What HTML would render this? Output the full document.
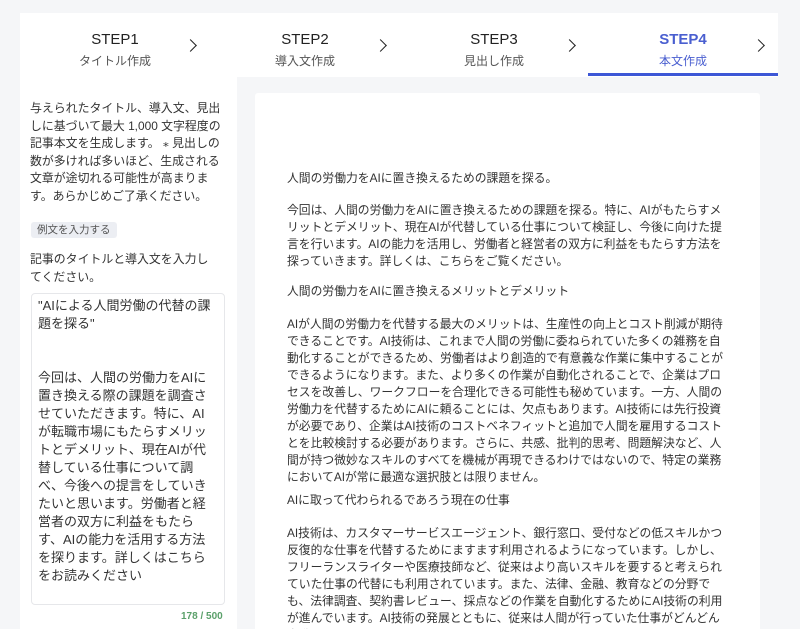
<!DOCTYPE html>
<html><head><meta charset="utf-8"><style>
*{margin:0;padding:0;box-sizing:border-box}
html,body{width:800px;height:629px;overflow:hidden}
body{background:#f5f6f8;font-family:"Liberation Sans","Noto Sans CJK JP",sans-serif;color:#333;position:relative}
.panel{position:absolute;left:20px;top:13px;width:758px;height:616px;background:#fff}
.step{position:absolute;top:13px;height:64px;text-align:center;width:190px}
.step .t{position:absolute;top:18px;width:100%;font-size:15px;color:#222}
.step .s{position:absolute;top:39px;width:100%;font-size:12px;color:#555}
.step .a{position:absolute;top:28px;right:15px;width:9px;height:9px;border-right:1.6px solid #222;border-top:1.6px solid #222;transform:rotate(45deg)}
.active .t{color:#4a5fd0;font-weight:bold}.active .s{color:#4a5fd0}
.bar{position:absolute;left:588px;top:73px;width:190px;height:3px;background:#3d57d6}
.gray{position:absolute;left:237px;top:77px;width:541px;height:560px;background:#f5f6f8}
.card{position:absolute;left:255px;top:93px;width:505px;height:560px;background:#fff;border-radius:3px}
.rt{position:absolute;left:287px;font-size:11.8px;line-height:17px;color:#333;white-space:nowrap}
.lt{position:absolute;left:30px;top:100px;font-size:11.9px;line-height:17.6px;color:#333;white-space:nowrap}
.btn{position:absolute;left:31px;top:222px;padding:0 6px;height:16px;line-height:16px;font-size:10.5px;background:#eceef3;border-radius:3px;color:#555}
.l2{position:absolute;left:30px;top:250px;font-size:11.9px;line-height:18px;white-space:nowrap}
.ta{position:absolute;left:31px;top:293px;width:194px;height:312px;border:1px solid #e6e7ea;border-radius:4px;padding:3px 6px;font-size:13px;line-height:18px;color:#333;white-space:nowrap;overflow:hidden}
.cnt{position:absolute;top:611px;font-size:10px;font-weight:bold;color:#5aa06a}
</style></head><body>
<div class="panel"></div>
<div class="step" style="left:20px"><div class="t">STEP1</div><div class="s">タイトル作成</div><div class="a"></div></div>
<div class="step" style="left:210px"><div class="t">STEP2</div><div class="s">導入文作成</div><div class="a"></div></div>
<div class="step" style="left:399px"><div class="t">STEP3</div><div class="s">見出し作成</div><div class="a"></div></div>
<div class="step active" style="left:588px"><div class="t">STEP4</div><div class="s">本文作成</div><div class="a"></div></div>
<div class="bar"></div>
<div class="lt">与えられたタイトル、導入文、見出<br>しに基づいて最大 1,000 文字程度の<br>記事本文を生成します。 ⁎ 見出しの<br>数が多ければ多いほど、生成される<br>文章が途切れる可能性が高まりま<br>す。あらかじめご了承ください。</div>
<div class="btn">例文を入力する</div>
<div class="l2">記事のタイトルと導入文を入力し<br>てください。</div>
<div class="ta">"AIによる人間労働の代替の課<br>題を探る"<br><br><br>今回は、人間の労働力をAIに<br>置き換える際の課題を調査さ<br>せていただきます。特に、AI<br>が転職市場にもたらすメリッ<br>トとデメリット、現在AIが代<br>替している仕事について調<br>べ、今後への提言をしていき<br>たいと思います。労働者と経<br>営者の双方に利益をもたら<br>す、AIの能力を活用する方法<br>を探ります。詳しくはこちら<br>をお読みください</div>
<div class="cnt" style="left:181px">178 / 500</div>
<div class="gray"></div>
<div class="card"></div>
<div class="rt" style="top:170px">人間の労働力をAIに置き換えるための課題を探る。</div>
<div class="rt" style="top:202px">今回は、人間の労働力をAIに置き換えるための課題を探る。特に、AIがもたらすメ<br>リットとデメリット、現在AIが代替している仕事について検証し、今後に向けた提<br>言を行います。AIの能力を活用し、労働者と経営者の双方に利益をもたらす方法を<br>探っていきます。詳しくは、こちらをご覧ください。</div>
<div class="rt" style="top:283px">人間の労働力をAIに置き換えるメリットとデメリット</div>
<div class="rt" style="top:316px">AIが人間の労働力を代替する最大のメリットは、生産性の向上とコスト削減が期待<br>できることです。AI技術は、これまで人間の労働に委ねられていた多くの雑務を自<br>動化することができるため、労働者はより創造的で有意義な作業に集中することが<br>できるようになります。また、より多くの作業が自動化されることで、企業はプロ<br>セスを改善し、ワークフローを合理化できる可能性も秘めています。一方、人間の<br>労働力を代替するためにAIに頼ることには、欠点もあります。AI技術には先行投資<br>が必要であり、企業はAI技術のコストベネフィットと追加で人間を雇用するコスト<br>とを比較検討する必要があります。さらに、共感、批判的思考、問題解決など、人<br>間が持つ微妙なスキルのすべてを機械が再現できるわけではないので、特定の業務<br>においてAIが常に最適な選択肢とは限りません。</div>
<div class="rt" style="top:492px">AIに取って代わられるであろう現在の仕事</div>
<div class="rt" style="top:525px">AI技術は、カスタマーサービスエージェント、銀行窓口、受付などの低スキルかつ<br>反復的な仕事を代替するためにますます利用されるようになっています。しかし、<br>フリーランスライターや医療技師など、従来はより高いスキルを要すると考えられ<br>ていた仕事の代替にも利用されています。また、法律、金融、教育などの分野で<br>も、法律調査、契約書レビュー、採点などの作業を自動化するためにAI技術の利用<br>が進んでいます。AI技術の発展とともに、従来は人間が行っていた仕事がどんどん<br>自動化されていくかもしれません。</div>
</body></html>
